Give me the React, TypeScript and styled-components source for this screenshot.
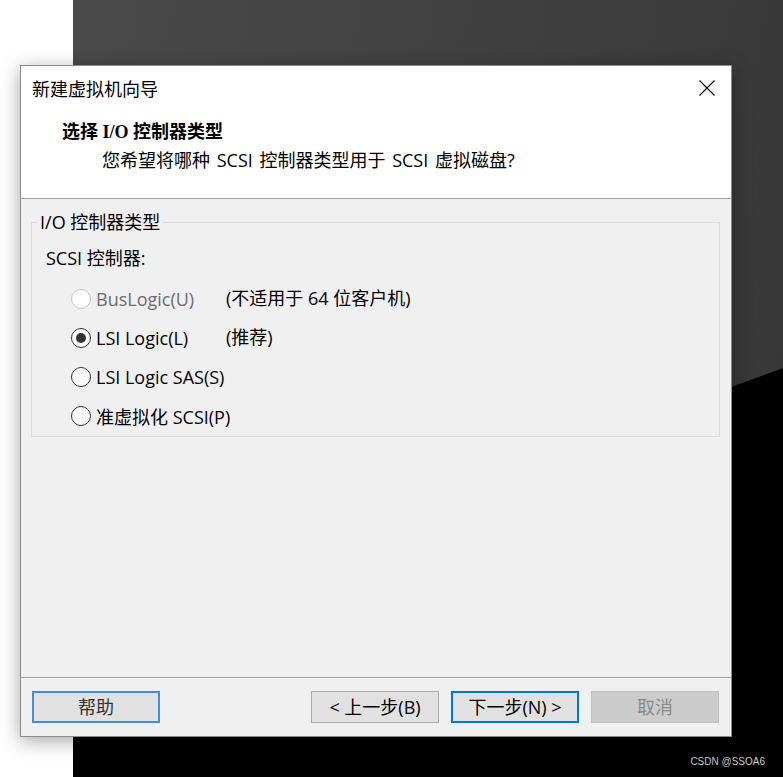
import React from "react";
import styled, { createGlobalStyle } from "styled-components";

const GlobalStyle = createGlobalStyle`
  html, body { margin: 0; padding: 0; background: #ffffff; overflow: hidden; }
  * { box-sizing: border-box; }
`;

const UI_FONT = `"Open Sans", "Noto Sans CJK SC", sans-serif`;

const Desktop = styled.div`
  position: relative;
  width: 783px;
  height: 777px;
  display: grid;
  grid-template-columns: 73px 1fr;
  font-family: ${UI_FONT};
`;

const WhiteStrip = styled.div`
  background: #ffffff;
`;

const DarkArea = styled.div`
  position: relative;
  background: #000000;
  display: flex;
  align-items: flex-end;
  justify-content: flex-end;
  padding: 0 18px 10px 0;
  &::before {
    content: "";
    position: absolute;
    inset: 0;
    background: linear-gradient(100deg, #4a4a4a 0%, #404040 50%, #363636 100%);
    clip-path: polygon(0 0, 100% 0, 100% 368px, 0 627px);
  }
`;

const Watermark = styled.span`
  position: relative;
  font-family: "Liberation Sans", "Noto Sans", sans-serif;
  font-size: 10px;
  color: #c8c8c8;
`;

const Window = styled.div`
  position: absolute;
  left: 20px;
  top: 65px;
  width: 712px;
  height: 672px;
  border: 1px solid #8a8a8a;
  background: #f0f0f0;
  display: flex;
  flex-direction: column;
  box-shadow: 0 4px 18px rgba(0, 0, 0, 0.35);
`;

const Header = styled.div`
  height: 133px;
  background: #ffffff;
  border-bottom: 1px solid #a0a0a0;
  display: flex;
  flex-direction: column;
`;

const TitleRow = styled.div`
  height: 44px;
  display: flex;
  align-items: center;
  justify-content: space-between;
  padding: 0 16px 0 11px;
`;

const TitleText = styled.span`
  font-family: "Noto Sans CJK SC", sans-serif;
  font-size: 18px;
  font-weight: 400;
  color: #000;
`;

const CloseButton = styled.span`
  display: flex;
  width: 16px;
  height: 16px;
`;

const Heading = styled.div`
  margin: 11px 0 0 41px;
  line-height: 22px;
  font-family: "Liberation Serif", "Noto Sans CJK SC", serif;
  font-weight: 700;
  font-size: 18px;
  color: #000;
`;

const SubHeading = styled.div`
  margin: 6px 0 0 81px;
  line-height: 22px;
  font-size: 18px;
  word-spacing: 2px;
  color: #000;
`;

const Body = styled.div`
  flex: 1;
  padding: 12px 11px 0 10px;
`;

const GroupBox = styled.fieldset`
  margin: 0;
  padding: 0 0 1px 14px;
  border: 1px solid #dcdcdc;
  min-width: 0;
`;

const Legend = styled.legend`
  margin-left: -8px;
  padding: 0 2px;
  line-height: 22px;
  font-size: 18px;
  color: #000;
`;

const FieldLabel = styled.div`
  margin-top: 14px;
  line-height: 22px;
  font-size: 18px;
  color: #000;
`;

const OptionList = styled.div`
  margin-top: 10px;
  display: flex;
  flex-direction: column;
`;

const OptionRow = styled.div`
  height: 39px;
  display: grid;
  grid-template-columns: 155px auto;
  align-items: center;
  padding-left: 25px;
`;

const RadioWrap = styled.label<{ $disabled?: boolean }>`
  display: flex;
  align-items: center;
  gap: 5px;
  font-size: 18px;
  color: ${(p) => (p.$disabled ? "#6d6d6d" : "#000")};
  white-space: nowrap;
`;

const RadioCircle = styled.span<{ $checked?: boolean; $disabled?: boolean }>`
  width: 20px;
  height: 20px;
  border-radius: 50%;
  background: #fff;
  border: 1px solid ${(p) => (p.$disabled ? "#c4c4c4" : "#333")};
  display: flex;
  align-items: center;
  justify-content: center;
  flex-shrink: 0;
  &::after {
    content: "";
    width: 10px;
    height: 10px;
    border-radius: 50%;
    background: #333;
    display: ${(p) => (p.$checked ? "block" : "none")};
  }
`;

const Note = styled.span`
  font-size: 18px;
  color: #000;
  margin-top: -4px;
  white-space: nowrap;
`;

const Footer = styled.div`
  border-top: 1px solid #a0a0a0;
  box-shadow: inset 0 1px 0 #ffffff;
  height: 59px;
  display: flex;
  align-items: center;
  padding: 0 12px 0 11px;
`;

const Spacer = styled.div`
  flex: 1;
`;

const ButtonGroup = styled.div`
  display: flex;
  gap: 12px;
`;

type Variant = "focus" | "default" | "primary" | "disabled";

const Button = styled.button<{ $variant: Variant }>`
  width: 128px;
  height: 32px;
  margin: 0;
  padding: 0;
  font-family: ${UI_FONT};
  font-size: 18px;
  line-height: 1;
  display: flex;
  align-items: center;
  justify-content: center;
  white-space: nowrap;
  background: ${(p) => (p.$variant === "disabled" ? "#cccccc" : "#e1e1e1")};
  color: ${(p) => (p.$variant === "disabled" ? "#8a8a8a" : p.$variant === "focus" ? "#333" : "#000")};
  border: ${(p) =>
    p.$variant === "focus"
      ? "2px solid #3c8ede"
      : p.$variant === "primary"
      ? "2px solid #0078d7"
      : p.$variant === "disabled"
      ? "1px solid #bfbfbf"
      : "1px solid #adadad"};
`;

const options = [
  { label: "BusLogic(U)", note: "(不适用于 64 位客户机)", disabled: true, checked: false },
  { label: "LSI Logic(L)", note: "(推荐)", disabled: false, checked: true },
  { label: "LSI Logic SAS(S)", note: "", disabled: false, checked: false },
  { label: "准虚拟化 SCSI(P)", note: "", disabled: false, checked: false },
];

export default function App() {
  return (
    <>
      <GlobalStyle />
      <Desktop>
        <WhiteStrip />
        <DarkArea>
          <Watermark>CSDN @SSOA6</Watermark>
        </DarkArea>
        <Window>
          <Header>
            <TitleRow>
              <TitleText>新建虚拟机向导</TitleText>
              <CloseButton>
                <svg width="16" height="16" viewBox="0 0 16 16">
                  <path d="M0.5 0.5 L15.5 15.5 M15.5 0.5 L0.5 15.5" stroke="#000" strokeWidth="1.1" fill="none" />
                </svg>
              </CloseButton>
            </TitleRow>
            <Heading>选择 I/O 控制器类型</Heading>
            <SubHeading>您希望将哪种 SCSI 控制器类型用于 SCSI 虚拟磁盘?</SubHeading>
          </Header>
          <Body>
            <GroupBox>
              <Legend>I/O 控制器类型</Legend>
              <FieldLabel>SCSI 控制器:</FieldLabel>
              <OptionList>
                {options.map((o) => (
                  <OptionRow key={o.label}>
                    <RadioWrap $disabled={o.disabled}>
                      <RadioCircle $checked={o.checked} $disabled={o.disabled} />
                      {o.label}
                    </RadioWrap>
                    <Note>{o.note}</Note>
                  </OptionRow>
                ))}
              </OptionList>
            </GroupBox>
          </Body>
          <Footer>
            <Button $variant="focus">帮助</Button>
            <Spacer />
            <ButtonGroup>
              <Button $variant="default">&lt; 上一步(B)</Button>
              <Button $variant="primary">下一步(N) &gt;</Button>
              <Button $variant="disabled">取消</Button>
            </ButtonGroup>
          </Footer>
        </Window>
      </Desktop>
    </>
  );
}
